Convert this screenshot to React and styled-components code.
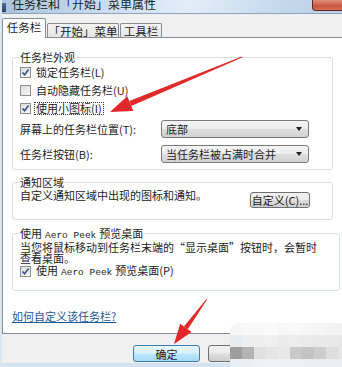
import React from 'react';
import styled, {createGlobalStyle} from 'styled-components';

const GlobalStyle = createGlobalStyle`
  html, body {
    margin: 0;
    padding: 0;
    width: 342px;
    height: 367px;
    overflow: hidden;
    background: #f0f0f0;
  }
  body {
    font-family: "Noto Sans CJK SC", "Liberation Sans", sans-serif;
    font-size: 11px;
    color: #1c1c1c;
  }
`;

const Window = styled.div`
  position: relative;
  width: 342px;
  height: 367px;
  overflow: hidden;
  background: #f0f0f0;
  border-left: 2px solid #dce6f0;
  box-sizing: border-box;
  display: flex;
  flex-direction: column;
`;

const TitleBar = styled.div`
  height: 13px;
  flex: none;
  display: flex;
  align-items: flex-end;
  overflow: hidden;
  background: linear-gradient(to right, #a9c2dc 0%, #c9dcef 30%, #e2edf8 55%, #c6daee 80%, #b8cfe7 100%);
  border-bottom: 1px solid #8ea4bc;
  margin-left: -2px;
`;

const TitleIcon = styled.span`
  width: 6px;
  height: 9px;
  margin-bottom: 1px;
  background: linear-gradient(#4c6d96, #2a4466);
  flex: none;
`;

// the reference crops the title bar, so only the lower half of the caption shows
const TitleText = styled.span`
  margin-left: 6px;
  font-size: 12px;
  line-height: 12px;
  color: #222;
  transform: translateY(-3px);
  white-space: nowrap;
`;

const CloseButton = styled.span`
  margin-left: auto;
  margin-right: -8px;
  align-self: flex-start;
  width: 36px;
  height: 10px;
  border: 1px solid #5d2a22;
  border-top: none;
  border-radius: 0 0 4px 4px;
  background: linear-gradient(#e0907e, #c9533c 60%, #d9705a);
`;

const TabRow = styled.div`
  height: 24px;
  flex: none;
  display: flex;
  align-items: flex-end;
  margin-bottom: -1px;
  position: relative;
  z-index: 1;
`;

const Tab = styled.div`
  box-sizing: border-box;
  height: ${p => (p.$active ? '20px' : '14px')};
  margin-bottom: ${p => (p.$active ? '0' : '1px')};
  margin-left: ${p => (p.$active ? '0' : '1px')};
  width: ${p => p.$width}px;
  border: 1px solid #898c95;
  border-bottom: ${p => (p.$active ? 'none' : '0')};
  border-radius: 2px 2px 0 0;
  background: ${p => (p.$active ? '#ffffff' : 'linear-gradient(#f4f4f4, #e4e4e4)')};
  display: flex;
  justify-content: center;
  align-items: ${p => (p.$active ? 'flex-start' : 'center')};
  padding-top: ${p => (p.$active ? '2px' : '0')};
  font-size: 11.5px;
  line-height: 12px;
  white-space: nowrap;
`;

const Panel = styled.div`
  box-sizing: border-box;
  width: 350px;
  height: 297px;
  flex: none;
  background: #ffffff;
  border: 1px solid #898c95;
  padding: 0 9px;
  display: flex;
  flex-direction: column;
`;

const Group = styled.fieldset`
  margin: ${p => p.$top}px 0 0 0;
  width: 321px;
  box-sizing: border-box;
  border: 1px solid #d5dfe5;
  border-radius: 3px;
  padding: 0 22px ${p => p.$bottom}px 6px;
  display: flex;
  flex-direction: column;
`;

const Legend = styled.legend`
  padding: 0 1px;
  line-height: 12px;
  font-size: 11px;
  white-space: nowrap;
`;

const Latin = styled.span`
  font-family: "Liberation Mono", monospace;
  font-size: 9.5px;
  line-height: 1;
  margin: 0 3px;
`;

const CheckRow = styled.div`
  height: ${p => p.$height || 18}px;
  display: flex;
  align-items: center;
  padding-left: 1px;
  line-height: 12px;
  white-space: nowrap;
`;

const Box = styled.span`
  width: 11px;
  height: 11px;
  box-sizing: border-box;
  border: 1px solid #8e8f8f;
  background: linear-gradient(135deg, #dcdcdc, #f8f8f8);
  margin-right: 3px;
  display: flex;
  align-items: center;
  justify-content: center;
  flex: none;
`;

const CheckLabel = styled.span`
  padding: 0 1px;
  border: 1px dotted ${p => (p.$focus ? '#333' : 'transparent')};
  line-height: 11px;
`;

const SelectRow = styled.div`
  display: flex;
  align-items: center;
  margin-top: ${p => p.$top}px;
  padding-left: 1px;
  white-space: nowrap;
`;

const SelectLabel = styled.span`
  width: 141px;
  flex: none;
  line-height: 12px;
`;

const Select = styled.div`
  width: 148px;
  height: 18px;
  box-sizing: border-box;
  border: 1px solid #7a7a7a;
  border-radius: 3px;
  background: linear-gradient(#f4f4f4 0%, #ececec 48%, #dedede 52%, #d2d2d2 100%);
  display: flex;
  align-items: center;
  padding: 0 6px 0 4px;
  line-height: 12px;
`;

const Arrow = styled.span`
  margin-left: auto;
  width: 0;
  height: 0;
  border-left: 3px solid transparent;
  border-right: 3px solid transparent;
  border-top: 4px solid #222;
`;

const NotifyRow = styled.div`
  display: flex;
  align-items: flex-start;
  justify-content: space-between;
  padding-left: 1px;
`;

const NotifyText = styled.span`
  margin-top: 1px;
  line-height: 12px;
  white-space: nowrap;
`;

const Button = styled.div`
  box-sizing: border-box;
  width: ${p => p.$width}px;
  height: ${p => p.$height || 17}px;
  margin-top: ${p => p.$top || 0}px;
  flex: none;
  border: 1px solid ${p => (p.$default ? '#3c7fb1' : '#707070')};
  border-radius: 3px;
  background: ${p => (p.$default
    ? 'linear-gradient(#eaf6fd 0%, #d9f0fc 48%, #bee6fd 52%, #a7d9f5 100%)'
    : 'linear-gradient(#f2f2f2 0%, #ebebeb 48%, #dddddd 52%, #cfcfcf 100%)')};
  display: flex;
  align-items: center;
  justify-content: center;
  line-height: 12px;
  white-space: nowrap;
`;

const Paragraph = styled.div`
  padding-left: 1px;
  margin-top: 1px;
  line-height: 11px;
`;

const Line = styled.div`
  height: 11px;
  line-height: 11px;
  white-space: nowrap;
`;

const Link = styled.a`
  margin-top: 19px;
  line-height: 12px;
  color: #1c5a96;
  text-decoration: underline;
  white-space: nowrap;
`;

const Footer = styled.div`
  flex: 1;
  display: flex;
  padding: 11px 0 0 131px;
  gap: 8px;
  border-bottom: 4px solid #d6e4f2;
`;

const Mosaic = styled.div`
  position: absolute;
  left: 228px;
  top: 323px;
  display: grid;
  grid-template-columns: repeat(10, 12px);
  grid-auto-rows: 12px;
  border-radius: 8px 0 0 8px;
  overflow: hidden;
`;

const Tile = styled.span`
  background: ${p => p.$c};
`;

const Overlay = styled.svg`
  position: absolute;
  left: -2px;
  top: 0;
  pointer-events: none;
`;

const Check = () => (
  <svg width="9" height="9" viewBox="0 0 9 9">
    <path d="M1.5 4.5 L3.6 6.8 L7.6 1.6" fill="none" stroke="#3b4f86" strokeWidth="1.6" />
  </svg>
);

const CheckItem = ({checked, focus, height, children}) => (
  <CheckRow $height={height}>
    <Box>{checked && <Check />}</Box>
    <CheckLabel $focus={focus}>{children}</CheckLabel>
  </CheckRow>
);

const mosaic = [
  ['#f6f6f6', '#f8f8f8', '#f9f9f9', '#fafafa', '#f7f7f7', '#f8f8f8', '#f6f6f6', '#f5f5f5', '#f3f3f3', '#f2f2f2'],
  ['#e9ebee', '#eceef0', '#eeeeee', '#efefef', '#ebebeb', '#ececec', '#eaeaea', '#e9e9e9', '#e8e8e8', '#e6e6e6'],
  ['#9d9d9d', '#b3b3b3', '#e0e0e0', '#e5e5e5', '#e8e8e8', '#c9c9c9', '#c3c3c3', '#cdcdcd', '#dedede', '#e4e4e4'],
  ['#e8eef4', '#ebeff4', '#edf1f5', '#eef1f5', '#edf0f4', '#eceff3', '#ebeef2', '#eaedf1', '#e9ecf0', '#e8ebef'],
];

// shaft tapers from thin tail to thick base, then a triangular head
const arrow = (tail, tip, len, wing, w0, w1) => {
  const dx = tip[0] - tail[0];
  const dy = tip[1] - tail[1];
  const d = Math.hypot(dx, dy);
  const ux = dx / d;
  const uy = dy / d;
  const px = -uy;
  const py = ux;
  const b = [tip[0] - ux * len, tip[1] - uy * len];
  const pt = (p, s) => `${(p[0] + px * s).toFixed(1)},${(p[1] + py * s).toFixed(1)}`;
  return {
    shaft: [pt(tail, w0), pt(b, w1), pt(b, -w1), pt(tail, -w0)].join(' '),
    head: [`${tip[0]},${tip[1]}`, pt(b, wing), pt(b, -wing)].join(' '),
  };
};

const a1 = arrow([242, 57], [110, 112], 22, 8, 0.4, 2.6);
const a2 = arrow([207, 299], [174, 344], 20, 7, 0.4, 2.4);

export default function App() {
  return (
    <>
      <GlobalStyle />
      <Window>
        <TitleBar>
          <TitleIcon />
          <TitleText>任务栏和「开始」菜单属性</TitleText>
          <CloseButton />
        </TitleBar>

        <TabRow>
          <Tab $active $width={44}>任务栏</Tab>
          <Tab $width={72}>「开始」菜单</Tab>
          <Tab $width={42}>工具栏</Tab>
        </TabRow>

        <Panel>
          <Group $top={13} $bottom={6}>
            <Legend>任务栏外观</Legend>
            <CheckItem checked>锁定任务栏(L)</CheckItem>
            <CheckItem>自动隐藏任务栏(U)</CheckItem>
            <CheckItem checked focus>使用小图标(I)</CheckItem>
            <SelectRow $top={3}>
              <SelectLabel>屏幕上的任务栏位置(T):</SelectLabel>
              <Select>底部<Arrow /></Select>
            </SelectRow>
            <SelectRow $top={7}>
              <SelectLabel>任务栏按钮(B):</SelectLabel>
              <Select>当任务栏被占满时合并<Arrow /></Select>
            </SelectRow>
          </Group>

          <Group $top={6} $bottom={11}>
            <Legend>通知区域</Legend>
            <NotifyRow>
              <NotifyText>自定义通知区域中出现的图标和通知。</NotifyText>
              <Button $width={60} $height={16} $top={4}>自定义(C)...</Button>
            </NotifyRow>
          </Group>

          <Group $top={7} $bottom={10}>
            <Legend>使用<Latin>Aero Peek</Latin>预览桌面</Legend>
            <Paragraph>
              <Line>当您将鼠标移动到任务栏末端的“显示桌面”按钮时，会暂时</Line>
              <Line>查看桌面。</Line>
            </Paragraph>
            <CheckItem checked height={16}>使用<Latin>Aero Peek</Latin>预览桌面(P)</CheckItem>
          </Group>

          <Link>如何自定义该任务栏?</Link>
        </Panel>

        <Footer>
          <Button $default $width={67}>确定</Button>
          <Button $width={67}>取消</Button>
          <Button $width={67}>应用(A)</Button>
        </Footer>

        <Mosaic>
          {mosaic.flat().map((c, i) => <Tile key={i} $c={c} />)}
        </Mosaic>

        <Overlay width="342" height="367">
          <polygon points={a1.shaft} fill="#e02a2a" />
          <polygon points={a1.head} fill="#e3262a" />
          <polygon points={a2.shaft} fill="#e02a2a" />
          <polygon points={a2.head} fill="#e3262a" />
        </Overlay>
      </Window>
    </>
  );
}
